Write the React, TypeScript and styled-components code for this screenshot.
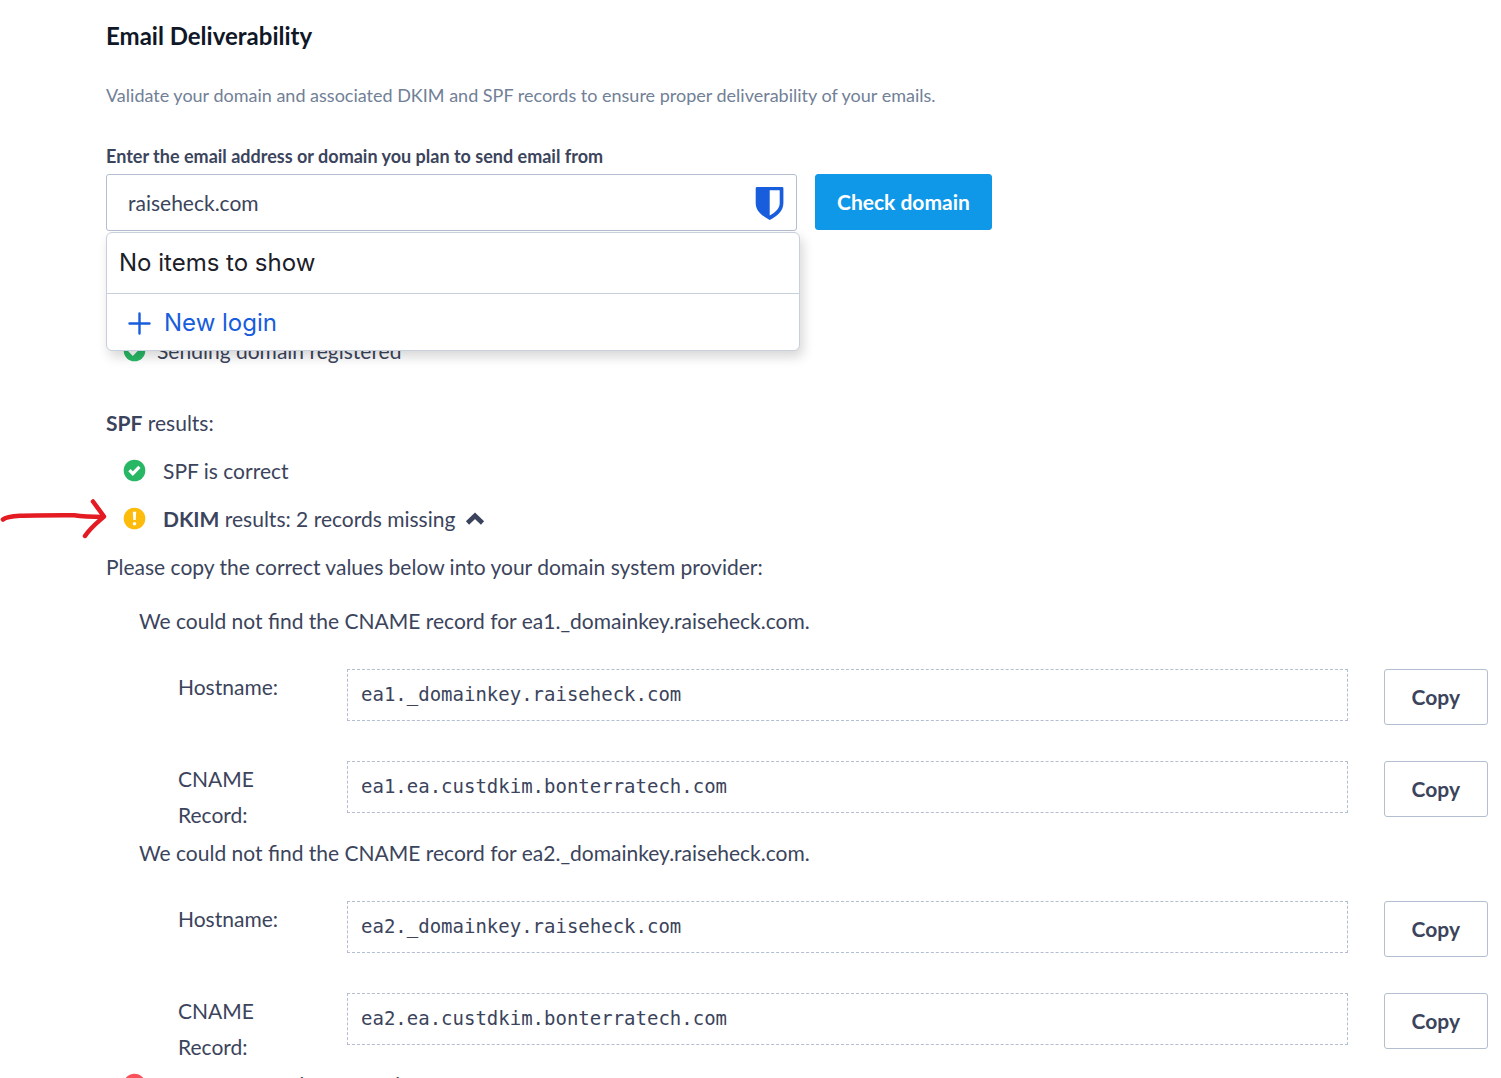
import React from 'react';
import styled, { createGlobalStyle } from 'styled-components';

const GlobalStyle = createGlobalStyle`
  *, *::before, *::after { box-sizing: border-box; }
  body {
    margin: 0;
    background: #fff;
    color: #3b445c;
    font: 21px/36px Lato, "Open Sans", sans-serif;
  }
  h1, p { margin: 0; }
  button, input { font: inherit; color: inherit; }
`;

const Page = styled.main`
  height: 100vh;
  overflow: hidden;
  padding: 18px 13px 0 106px;
`;

const Title = styled.h1`
  font-size: 24px;
  font-weight: 700;
  color: #101828;
`;

const Lead = styled.p`
  margin-top: 23px;
  font-size: 18px;
  color: #718096;
`;

const FieldLabel = styled.label`
  display: block;
  margin-top: 29px;
  font-size: 18px;
  line-height: 28px;
  font-weight: 700;
`;

const DomainForm = styled.form`
  display: flex;
  align-items: flex-start;
  gap: 18px;
  margin-top: 4px;
`;

const DomainField = styled.div`
  position: relative;
  width: 50%;
`;

const DomainInput = styled.input`
  display: block;
  width: 100%;
  height: 57px;
  padding: 0 60px 0 21px;
  border: 1px solid #b3bed0;
  border-radius: 3px;
  background: #fff;
  outline: none;
`;

const VaultIcon = styled.svg`
  position: absolute;
  top: 12px;
  right: 12px;
`;

const LoginMenu = styled.div`
  position: absolute;
  z-index: 1;
  top: 58px;
  left: 0;
  right: -3px;
  border: 1px solid #c7d0dc;
  border-radius: 6px;
  background: #fff;
  box-shadow: 3px 6px 12px rgba(0, 0, 0, 0.16);
  font-family: Inter, "Liberation Sans", sans-serif;
  font-size: 24px;
`;

const MenuMessage = styled.p`
  padding: 12px;
  border-bottom: 1px solid #c7d0dc;
  color: #1b2029;
`;

const NewLogin = styled.button`
  display: flex;
  align-items: center;
  gap: 12px;
  width: 100%;
  padding: 11px 21px 9px;
  border: 0;
  background: none;
  color: #175ddc;
`;

const Button = styled.button<{ $primary?: boolean }>`
  flex: none;
  height: 56px;
  padding: 0 ${p => (p.$primary ? 21 : 27)}px;
  border: 1px solid ${p => (p.$primary ? '#0f98e8' : '#b3bed0')};
  border-radius: 3px;
  background: ${p => (p.$primary ? '#0f98e8' : '#fff')};
  color: ${p => (p.$primary ? '#fff' : '#3b445c')};
  font-weight: 700;
`;

const Results = styled.section`
  margin-top: 102px;
`;

const StatusRow = styled.div<{ $gap?: number; $flush?: boolean }>`
  display: flex;
  align-items: center;
  gap: ${p => p.$gap ?? 17}px;
  padding-left: 17px;
  margin-top: ${p => (p.$flush ? 0 : 12)}px;
`;

const Heading = styled.p`
  margin-top: 36px;
`;

const Note = styled.p`
  margin-top: 12px;
`;

const Toggle = styled.button`
  display: flex;
  align-items: center;
  gap: 10px;
  padding: 0;
  border: 0;
  background: none;
`;

const Records = styled.div`
  padding: 18px 0 0 33px;
`;

const RecordGroup = styled.div`
  margin-bottom: 2px;
`;

const RecordRow = styled.div`
  display: grid;
  grid-template-columns: 133px 1fr auto;
  align-items: start;
  column-gap: 36px;
  padding-left: 39px;
  margin-top: 30px;

  & + & { margin-top: 36px; }
`;

const RecordName = styled.span`
  max-width: 110px;
`;

const RecordValue = styled.code`
  padding: 6px 13px 8px;
  border: 1px dashed #b3bed0;
  font: 19px/36px "DejaVu Sans Mono", monospace;
`;

const Arrow = styled.svg`
  position: absolute;
  left: 0;
  top: 496px;
`;

const StatusIcon = ({ kind }: { kind: 'ok' | 'warn' | 'error' }) => {
  const fill = { ok: '#28b865', warn: '#fdbb0b', error: '#f9525a' }[kind];
  return (
    <svg width="23" height="24" viewBox="0 0 23 24" fill="none" aria-hidden="true">
      <circle cx="11.5" cy="11.5" r="10.8" fill={fill} />
      {kind === 'ok' && <path d="M6.400 11.200l3.400 3.400 6.600-6.800" stroke="#fff" strokeWidth="3.200" />}
      {kind === 'warn' && (
        <>
          <path d="M9.800 4.700h3.400l-.5 8.400h-2.400z" fill="#fff" />
          <circle cx="11.5" cy="16.700" r="1.800" fill="#fff" />
        </>
      )}
      {kind === 'error' && <path d="M7.500 7.500l8 8m0-8l-8 8" stroke="#fff" strokeWidth="2.800" />}
    </svg>
  );
};

const groups = ['ea1', 'ea2'].map(key => ({
  key,
  rows: [
    { name: 'Hostname:', value: `${key}._domainkey.raiseheck.com` },
    { name: 'CNAME Record:', value: `${key}.ea.custdkim.bonterratech.com` },
  ],
}));

export default function App() {
  return (
    <Page>
      <GlobalStyle />
      <Title>Email Deliverability</Title>
      <Lead>
        Validate your domain and associated DKIM and SPF records to ensure proper deliverability of your emails.
      </Lead>
      <FieldLabel htmlFor="domain">Enter the email address or domain you plan to send email from</FieldLabel>
      <DomainForm onSubmit={e => e.preventDefault()}>
        <DomainField>
          <DomainInput id="domain" type="text" defaultValue="raiseheck.com" />
          <VaultIcon width="30" height="34" viewBox="0 0 30 34" aria-hidden="true">
            <path
              fill="#175ddc"
              fillRule="evenodd"
              d="M2.300 1h24.800q1.300 0 1.300 1.300V17c0 8-6 13-13.700 17C7 30 .7 25 .7 17V2.300Q.7 1 2.300 1zM14.700 4.300v25.200c6-3.300 10-7 10-12.500V4.300z"
            />
          </VaultIcon>
          <LoginMenu>
            <MenuMessage>No items to show</MenuMessage>
            <NewLogin type="button">
              <svg width="24" height="24" viewBox="0 0 24 24" aria-hidden="true">
                <path d="M11.500 2.500v20M1.500 12.500h20" stroke="#175ddc" strokeWidth="2.400" strokeLinecap="round" />
              </svg>
              New login
            </NewLogin>
          </LoginMenu>
        </DomainField>
        <Button type="submit" $primary>Check domain</Button>
      </DomainForm>

      <Results>
        <StatusRow $gap={11}>
          <StatusIcon kind="ok" />
          <span>Sending domain registered</span>
        </StatusRow>
        <Heading><strong>SPF</strong> results:</Heading>
        <StatusRow>
          <StatusIcon kind="ok" />
          <span>SPF is correct</span>
        </StatusRow>
        <StatusRow>
          <StatusIcon kind="warn" />
          <Toggle type="button" aria-expanded="true">
            <span><strong>DKIM</strong> results: 2 records missing</span>
            <svg width="20" height="14" viewBox="0 0 20 14" aria-hidden="true">
              <path d="M2.500 11L10 3.800l7.500 7.200" fill="none" stroke="#3b445c" strokeWidth="4.600" />
            </svg>
          </Toggle>
        </StatusRow>
        <Note>Please copy the correct values below into your domain system provider:</Note>
        <Records>
          {groups.map(group => (
            <RecordGroup key={group.key}>
              <p>We could not find the CNAME record for {group.key}._domainkey.raiseheck.com.</p>
              {group.rows.map(row => (
                <RecordRow key={row.name}>
                  <RecordName>{row.name}</RecordName>
                  <RecordValue>{row.value}</RecordValue>
                  <Button type="button" aria-label={`Copy ${row.value}`}>Copy</Button>
                </RecordRow>
              ))}
            </RecordGroup>
          ))}
        </Records>
        <StatusRow $flush>
          <StatusIcon kind="error" />
          <span>DMARC record not found</span>
        </StatusRow>
      </Results>

      <Arrow width="108" height="46" viewBox="0 0 108 46" fill="none" stroke="#e41b23" strokeWidth="4.500" strokeLinecap="round" strokeLinejoin="round" aria-hidden="true">
        <path d="M3 23.500C8 19 25 19.300 74 19.300C84 20.800 92 21 103 21" />
        <path d="M93 5.500L104 20.500C98 26 91 31 85 40" />
      </Arrow>
    </Page>
  );
}
